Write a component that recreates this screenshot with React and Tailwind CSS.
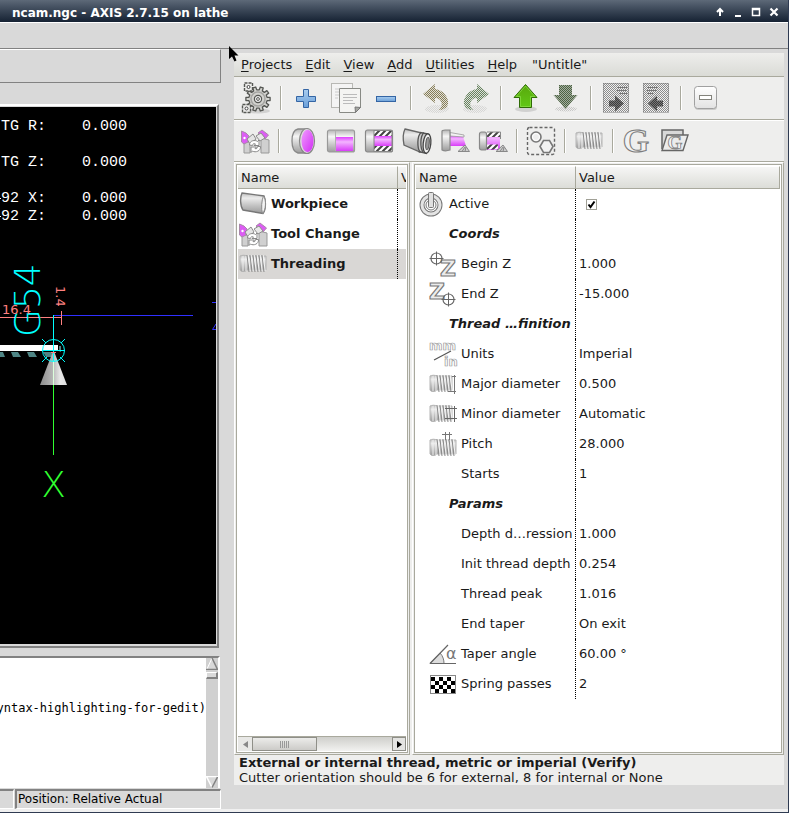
import React from 'react';

const range = (n) => Array.from({ length: n }, (_, i) => i);

function gearPath(cx, cy, outer, inner, teeth) {
  const pts = [];
  range(teeth).forEach((i) => {
    const a = (i / teeth) * Math.PI * 2;
    const s = (Math.PI * 2) / teeth;
    [[-0.28, inner], [-0.2, outer], [0.2, outer], [0.28, inner]].forEach(([o, r]) => {
      pts.push(`${(cx + Math.cos(a + o * s) * r).toFixed(2)} ${(cy + Math.sin(a + o * s) * r).toFixed(2)}`);
    });
  });
  return `M${pts.join('L')}Z`;
}

function Defs() {
  return (
    <svg className="absolute h-0 w-0" aria-hidden="true">
      <defs>
        <linearGradient id="steel" x1="0" y1="0" x2="0" y2="1">
          <stop offset="0" stopColor="#b4b4b4" />
          <stop offset="0.3" stopColor="#f6f6f6" />
          <stop offset="1" stopColor="#9c9c9c" />
        </linearGradient>
        <linearGradient id="softSteel" x1="0" y1="0" x2="0" y2="1">
          <stop offset="0" stopColor="#bdbdbd" />
          <stop offset="0.25" stopColor="#ececec" />
          <stop offset="0.6" stopColor="#c4c4c4" />
          <stop offset="1" stopColor="#9a9a9a" />
        </linearGradient>
        <linearGradient id="magenta" x1="0" y1="0" x2="0" y2="1">
          <stop offset="0" stopColor="#e040ff" />
          <stop offset="0.35" stopColor="#f3b4ff" />
          <stop offset="1" stopColor="#d93cf8" />
        </linearGradient>
        <linearGradient id="magentaFace" x1="0" y1="0" x2="1" y2="1">
          <stop offset="0" stopColor="#f09cff" />
          <stop offset="1" stopColor="#d22cf4" />
        </linearGradient>
        <linearGradient id="blue" x1="0" y1="0" x2="0" y2="1">
          <stop offset="0" stopColor="#a9cdf0" />
          <stop offset="1" stopColor="#6a9fd8" />
        </linearGradient>
        <linearGradient id="green" x1="0" y1="0" x2="0" y2="1">
          <stop offset="0" stopColor="#58a80c" />
          <stop offset="1" stopColor="#62c816" />
        </linearGradient>
        <linearGradient id="cone" x1="0" y1="0" x2="1" y2="0">
          <stop offset="0" stopColor="#8c8c8c" />
          <stop offset="0.45" stopColor="#b4b4b4" />
          <stop offset="0.75" stopColor="#e8e8e8" />
          <stop offset="1" stopColor="#dcdcdc" />
        </linearGradient>
        <linearGradient id="key" x1="0" y1="0" x2="0" y2="1">
          <stop offset="0" stopColor="#ffffff" />
          <stop offset="1" stopColor="#e2e2e2" />
        </linearGradient>
        <pattern id="ditherOlive" width="2" height="2" patternUnits="userSpaceOnUse">
          <rect width="2" height="2" fill="#e2e0d6" />
          <rect width="1" height="1" fill="#857c58" /><rect x="1" y="1" width="1" height="1" fill="#857c58" />
        </pattern>
        <pattern id="ditherGreen" width="2" height="2" patternUnits="userSpaceOnUse">
          <rect width="2" height="2" fill="#dce0da" />
          <rect width="1" height="1" fill="#66825e" /><rect x="1" y="1" width="1" height="1" fill="#66825e" />
        </pattern>
        <pattern id="ditherDark" width="2" height="2" patternUnits="userSpaceOnUse">
          <rect width="2" height="2" fill="#a4aca0" />
          <rect width="1" height="1" fill="#4c6442" /><rect x="1" y="1" width="1" height="1" fill="#4c6442" />
        </pattern>
        <pattern id="ditherGrey" width="2" height="2" patternUnits="userSpaceOnUse">
          <rect width="1" height="1" fill="#8c8c8c" /><rect x="1" y="1" width="1" height="1" fill="#8c8c8c" />
        </pattern>
        <pattern id="ditherBlack" width="2" height="2" patternUnits="userSpaceOnUse">
          <rect width="2" height="2" fill="#777" />
          <rect width="1" height="1" fill="#3c3c3c" /><rect x="1" y="1" width="1" height="1" fill="#3c3c3c" />
        </pattern>
        <pattern id="hatch" width="6" height="6" patternUnits="userSpaceOnUse">
          <rect width="6" height="6" fill="#fff" />
          <path d="M-1 7L7 -1M-1 1L1 -1M5 7L7 5" stroke="#444" strokeWidth="2" />
        </pattern>
      </defs>
    </svg>
  );
}

function Icon28({ children }) {
  return (
    <svg width="28" height="28" viewBox="0 0 28 28" fill="none" className="block flex-none overflow-visible" aria-hidden="true">
      {children}
    </svg>
  );
}

function Icon32({ children }) {
  return (
    <svg width="32" height="32" viewBox="0 0 32 32" fill="none" className="block flex-none overflow-visible" aria-hidden="true">
      {children}
    </svg>
  );
}

/* ---------- main toolbar ---------- */
const Gears = () => (
  <Icon32>
    <ellipse cx="18" cy="29" rx="12" ry="2.5" fill="#000" opacity="0.12" />
    <path d={gearPath(18, 17, 12.2, 9.2, 10)} fill="#d2d2ce" stroke="#555753" strokeWidth="1.3" strokeLinejoin="round" />
    <circle cx="18" cy="17" r="7" stroke="#a5a5a2" strokeWidth="1.6" />
    <circle cx="18" cy="17" r="3.6" fill="#eee" stroke="#555753" strokeWidth="1.2" />
    <circle cx="18" cy="17" r="1.4" fill="#fff" stroke="#555753" />
    {[[8.5, 5], [6.5, 26.5]].map(([x, y]) => (
      <g key={y}>
        <path d={`M${x - 4} ${y - 4}h8v8h-8z`} fill="#ececea" stroke="#555753" strokeWidth="1.4" strokeDasharray="3 1" strokeLinejoin="round" />
        <circle cx={x} cy={y} r="1.5" fill="#fff" stroke="#444" />
      </g>
    ))}
  </Icon32>
);
const Plus = () => (
  <Icon32>
    <path d="M13.5 7.5h5v7h7v5h-7v6h-5v-6h-7v-5h7z" fill="url(#blue)" stroke="#3465a4" />
  </Icon32>
);
const Minus = () => (
  <Icon32><rect x="6.500" y="14.500" width="19" height="5" fill="url(#blue)" stroke="#3465a4" /></Icon32>
);
const Copy = () => (
  <Icon32>
    <rect x="1.500" y="1.500" width="21" height="24" fill="#f4f4f4" stroke="#b8b8b4" />
    <path d="M5 7h4M5 10h4M5 13h4M5 16h3" stroke="#ccc" />
    <path d="M9.500 6.500h21v19l-5 5h-16z" fill="#f4f4f2" stroke="#888a85" />
    <path d="M25.500 30.500l-.5-5.500 5.500.5z" fill="#a5a7a2" stroke="#777" />
    <path d="M13 12.500h14M13 15.500h14M13 18.500h10M13 21.500h12" stroke="#bbb" />
  </Icon32>
);
const CURVE = 'M1 10L13 0V5C22 6 27 14 26 20C25 24 21 26 17 26C22 22 20 14 13 14V19Z';
const Undo = () => (
  <Icon32>
    <ellipse cx="17" cy="27" rx="12" ry="4" fill="url(#ditherGrey)" opacity="0.25" />
    <path transform="translate(2 2)" d={CURVE} fill="url(#ditherOlive)" />
  </Icon32>
);
const Redo = () => (
  <Icon32>
    <ellipse cx="15" cy="27" rx="12" ry="4" fill="url(#ditherGrey)" opacity="0.25" />
    <path transform="translate(30 2) scale(-1 1)" d={CURVE} fill="url(#ditherGreen)" />
  </Icon32>
);
const ArrowUp = () => (
  <Icon32>
    <ellipse cx="16" cy="27" rx="11" ry="3" fill="#000" opacity="0.12" />
    <path d="M15.500 2.500L27 15.500H21.500V25.500H9.500V15.500H4Z" fill="url(#green)" stroke="#2f6b06" />
    <path d="M15.500 4L25 14.500H20.500V24.500H10.500V14.500H6.200Z" stroke="#8be04a" opacity="0.7" />
  </Icon32>
);
const ArrowDown = () => (
  <Icon32>
    <ellipse cx="16" cy="27" rx="11" ry="2.5" fill="url(#ditherGrey)" opacity="0.4" />
    <path d="M9 3H22V13H27.500L15.500 27L3.500 13H9Z" fill="url(#ditherDark)" />
  </Icon32>
);
const PageIcon = ({ flip }) => (
  <Icon32>
    <rect x="3" y="1" width="26" height="29" fill="#f0f0f0" />
    <rect x="3" y="1" width="26" height="29" fill="url(#ditherGrey)" />
    <rect x="3.500" y="1.500" width="25" height="29" stroke="#777" strokeDasharray="1 1" />
    <path d={flip ? 'M7 5.500h11M7 8.500h10M7 11.500h6' : 'M17 5.500h10M17 8.500h10M19 11.500h8'} stroke="#777" />
    <path
      transform={flip ? 'translate(32 0) scale(-1 1)' : undefined}
      d="M9 18.500h6v-5l9 8-9 8v-5h-6z"
      fill="url(#ditherBlack)"
    />
  </Icon32>
);
const Collapse = () => (
  <Icon32>
    <rect x="5" y="6" width="22" height="22" rx="3" fill="#000" opacity="0.15" />
    <rect x="4.500" y="4.500" width="22" height="22" rx="3" fill="url(#key)" stroke="#a0a0a0" />
    <rect x="9.500" y="13.500" width="12" height="4" fill="#fff" stroke="#83837c" />
  </Icon32>
);

/* ---------- machining features ---------- */
const ToolChange = () => (
  <Icon28>
    <path d="M3 15H9V26H3ZM20 11L28 13V26H20Z" fill="#d0d0d0" stroke="#999" />
    <path d="M0.500 4L5 6L8 9L7 15L3 17L0.500 15Z" fill="#dc5cf4" stroke="#a8a" />
    <circle cx="3.500" cy="11" r="1.200" fill="#fff" />
    <path d="M6 12L12 7L15 12L9 17Z" fill="#e4e4e4" stroke="#8c8c8c" />
    <path d="M17 6L21 3L27.500 8L24 12Z" fill="#dc5cf4" stroke="#a8a" />
    <path d="M15 9L20 6L24 11L19 14Z" fill="#e8e8e8" stroke="#8c8c8c" />
    <path d="M8.500 18C8.500 13.500 14 12.500 16.500 14.500L18 13V18.500H13L14.500 17C13 16 11.500 17 11.500 18.500Z" fill="#fff" stroke="#888" />
    <path d="M19.500 19.500C20 24 14.500 26 11.500 24L10 25.500V20H15.500L14 21.500C15.500 22.500 16.500 21 16.500 19.500Z" fill="#fff" stroke="#888" />
  </Icon28>
);
const Facing = () => (
  <Icon28>
    <path d="M9 2C4 3 3 9 3 14C3 20 5 25 9 26H18V2Z" fill="url(#steel)" stroke="#888" strokeWidth="1.300" />
    <ellipse cx="18" cy="14" rx="7.500" ry="12.500" fill="#ddd" stroke="#888" strokeWidth="1.200" />
    <ellipse cx="18.500" cy="14" rx="6" ry="11.300" fill="url(#magentaFace)" />
  </Icon28>
);
const Turning = () => (
  <Icon28>
    <rect x="0.500" y="3" width="27" height="22" rx="2" fill="url(#steel)" stroke="#999" strokeWidth="1.200" />
    <rect x="9" y="10" width="17" height="14" fill="url(#magenta)" />
    <path d="M8.500 4V24" stroke="#b0b0b0" />
  </Icon28>
);
const Boring = () => (
  <Icon28>
    <rect x="0.500" y="3" width="27" height="22" rx="2" fill="url(#steel)" stroke="#888" strokeWidth="1.200" />
    <rect x="9" y="3.500" width="18" height="5.500" fill="url(#hatch)" />
    <rect x="9" y="9" width="18" height="10" fill="url(#magenta)" />
    <rect x="9" y="19" width="18" height="5.500" fill="url(#hatch)" />
    <rect x="9" y="3.500" width="18" height="21" stroke="#888" />
  </Icon28>
);
const Tube = () => (
  <Icon28>
    <path d="M2 2L19 6L17 25L1 18C0 13 0 6 2 2Z" fill="url(#softSteel)" stroke="#666" strokeWidth="1.300" />
    <path d="M17 5.500L24 6.500V26L15.500 24Z" fill="#ccc" />
    {[17, 20].map((x) => <path key={x} d={`M${x + 1} 5.500C${x - 3} 9 ${x - 3} 21 ${x} 25`} stroke="#555" strokeWidth="1.300" />)}
    <path d="M17 5.500L25 7M15.500 24.500L24 26.500" stroke="#555" strokeWidth="1.300" />
    <ellipse cx="24" cy="16.500" rx="3.800" ry="9.800" transform="rotate(6 24 16.500)" fill="#eee" stroke="#444" strokeWidth="1.300" />
    <ellipse cx="24.500" cy="16.500" rx="1.700" ry="6" transform="rotate(6 24 16.500)" fill="#999" stroke="#555" />
  </Icon28>
);
const Wedge = () => (
  <>
    <path d="M17 24.500L24 18L28.500 24.500Z" fill="#ccc" stroke="#888" />
    <path d="M21 24.500L24 20M24 24.500L25 20" stroke="#888" />
  </>
);
const Profile = () => (
  <Icon28>
    <path d="M9 8L22 9.500L25 19H9Z" fill="url(#magenta)" />
    <path d="M9 5.500L23 8V10L9 9Z" fill="#f2f2f2" stroke="#999" strokeWidth="0.800" />
    <path d="M1 4C1 3 3 3 4 3H9V23C6 24 3 24 1 23Z" fill="url(#steel)" stroke="#888" strokeWidth="1.200" />
    <Wedge />
  </Icon28>
);
const Internal = () => (
  <Icon28>
    <rect x="8" y="5" width="13" height="18" fill="url(#magenta)" />
    <rect x="8" y="5" width="14" height="5" fill="url(#hatch)" />
    <rect x="8" y="17.500" width="11" height="5" fill="url(#hatch)" />
    <rect x="0.500" y="5" width="7" height="18" rx="2" fill="url(#steel)" stroke="#888" strokeWidth="1.200" />
    <path d="M8 5H21.500V12" stroke="#888" />
    <Wedge />
  </Icon28>
);
const Group = () => (
  <Icon28>
    <rect x="0.500" y="0.500" width="27" height="27" rx="2" stroke="#666" strokeWidth="1.400" strokeDasharray="3 2" />
    <circle cx="9" cy="10" r="5" fill="#eee" stroke="#777" strokeWidth="1.600" />
    <circle cx="9" cy="10" r="3.500" stroke="#fff" />
    <path d="M16.500 13.500H22.500L26 19.500L22.500 25.500H16.500L13 19.500Z" fill="#f2f2f2" stroke="#777" strokeWidth="1.600" />
  </Icon28>
);
const ThreadBody = ({ top = 5, end = 27 }) => (
  <g>
    <path d={`M1 ${top + 1}C3 ${top} 6 ${top} 8 ${top + 1}H${end}V${top + 15}H8C6 ${top + 17} 2 ${top + 17} 1 ${top + 15}Z`} fill="url(#softSteel)" stroke="#b4b4b4" />
    <path d={`M4 ${top + 1}V${top + 16}M7 ${top + 1}V${top + 16}`} stroke="#f0f0f0" />
    {[8, 11, 14, 17, 20, 23].filter((x) => x < end - 2).map((x) => (
      <g key={x}>
        <path d={`M${x} ${top}L${x + 2} ${top + 17}`} stroke="#8a8a8a" />
        <path d={`M${x + 1.2} ${top}L${x + 3.2} ${top + 16}`} stroke="#f4f4f4" />
      </g>
    ))}
  </g>
);
const Thread = () => <Icon28><ThreadBody /></Icon28>;
const GLetter = () => (
  <Icon28>
    <text x="13" y="25" textAnchor="middle" fontFamily="Liberation Serif, serif" fontSize="34" fontWeight="700" fill="#f2f2f2" stroke="#7c7c7c" strokeWidth="1.100">G</text>
  </Icon28>
);
const GFolder = () => (
  <Icon28>
    <path d="M1 22V3H22V8" fill="#d8d8d8" stroke="#666" strokeWidth="1.500" />
    <path d="M6 8H27L22 23.500H1Z" fill="#ececec" stroke="#666" strokeWidth="1.400" />
    <text x="14" y="22" textAnchor="middle" fontFamily="Liberation Serif, serif" fontSize="19" fontWeight="700" fill="#f8f8f8" stroke="#888" strokeWidth="0.900">G</text>
  </Icon28>
);
const Workpiece = () => (
  <Icon28>
    <path d="M3 3L25 6C27 10 27 20 24 23.500L4 20C1 16 1 7 3 3Z" fill="url(#softSteel)" stroke="#777" strokeWidth="1.400" />
    <path d="M24.500 6C22.500 10 22 19 23.500 23.500C27 20 27.500 10 24.500 6Z" fill="#f4f4f4" stroke="#888" />
  </Icon28>
);

/* ---------- parameters ---------- */
const Power = () => (
  <Icon28>
    <circle cx="14" cy="15" r="9" stroke="#777" strokeWidth="5" />
    <circle cx="14" cy="15" r="9" stroke="#e4e4e4" strokeWidth="3" />
    <circle cx="14" cy="15" r="5" stroke="#777" />
    <rect x="11.500" y="2.500" width="5" height="15" rx="1" fill="#e0e0e0" stroke="#777" />
  </Icon28>
);
const Cross = ({ x, y }) => (
  <g stroke="#666">
    <circle cx={x} cy={y} r="5.500" strokeWidth="1.200" />
    <path d={`M${x - 7} ${y}h14M${x} ${y - 7}v14`} />
  </g>
);
const ZShape = ({ x, y }) => (
  <text x={x} y={y} fontFamily="DejaVu Sans, sans-serif" fontSize="22" fontWeight="700" fill="#ececec" stroke="#777" strokeWidth="1.100">Z</text>
);
const BeginZ = () => <Icon28><ZShape x="11" y="26" /><Cross x={7.5} y={8.5} /></Icon28>;
const EndZ = () => <Icon28><ZShape x="0" y="19" /><Cross x={19.5} y={19.5} /></Icon28>;
const Units = () => (
  <Icon28>
    <text x="0" y="10" fontFamily="DejaVu Sans, sans-serif" fontSize="13" fontWeight="700" fill="#fff" stroke="#999" strokeWidth="0.700">mm</text>
    <path d="M5 20L22 11" stroke="#555" strokeWidth="1.200" />
    <text x="15" y="26" fontFamily="DejaVu Sans, sans-serif" fontSize="13" fontWeight="700" fill="#fff" stroke="#999" strokeWidth="0.700">in</text>
  </Icon28>
);
const Major = () => <Icon28><ThreadBody end={23} /><path d="M19 21.500H27M23 6.500H27M25.500 5V24" stroke="#777" /></Icon28>;
const Minor = () => <Icon28><ThreadBody end={23} /><path d="M16 8.500H28M16 18.500H28M25.500 6V22" stroke="#666" /></Icon28>;
const Pitch = () => <Icon28><ThreadBody top={9} /><path d="M13 4.500H23M16.500 2V10M20.500 2V10" stroke="#777" /></Icon28>;
const Taper = () => (
  <Icon28>
    <path d="M1 23.500L11 13C14 16 15 20 15 23.500Z" fill="#ddd" stroke="#777" />
    <path d="M1 23.500H27M1 23.500L19 5" stroke="#666" strokeWidth="1.200" />
    <text x="17" y="19" fontFamily="DejaVu Sans, sans-serif" fontSize="16" fill="#777">α</text>
  </Icon28>
);
const Checker = () => (
  <Icon28>
    <rect x="1.500" y="5.500" width="25" height="18" fill="#fff" stroke="#888" />
    {range(6).map((c) => range(4).map((r) => (c + r) % 2 === 0 && (
      <rect key={`${c}-${r}`} x={2 + c * 4} y={7 + r * 4} width="4" height="4" fill="#000" />
    )))}
  </Icon28>
);

/* ---------- chrome ---------- */
const TitleBar = () => (
  <header className="flex h-[22px] items-center justify-between bg-linear-to-b from-[#5d6978] to-[#162233] pl-3 pr-[5px] text-white">
    <h1 className="whitespace-nowrap pt-1 text-xs font-bold">ncam.ngc - AXIS 2.7.15 on lathe</h1>
    <div className="flex items-center pt-[2px]">
      {[
        ['Shade', 'M7 11V4M4 7L7 4L10 7', 2],
        ['Minimize', 'M4 11H10', 2],
        ['Maximize', 'M3.5 3.5H10.500V10.500H3.500ZM3 4.500H11', 1.5],
        ['Close', 'M3.500 3.500L10.500 10.500M10.500 3.500L3.500 10.500', 2.2],
      ].map(([label, d, w]) => (
        <button key={label} aria-label={label} className="flex w-[18px] justify-center">
          <svg width="14" height="14" viewBox="0 0 14 14" fill="none" stroke="#fff" strokeWidth={w}><path d={d} /></svg>
        </button>
      ))}
    </div>
  </header>
);

const Backplot = () => (
  <section aria-label="Backplot" className="mr-[2px] mt-[21px] flex flex-1 flex-col border-b-2 border-r-2 border-t-2 border-b-[#828282] border-r-[#828282] border-t-white pb-[2px] pr-px pt-px">
    <div className="grid flex-1 overflow-hidden bg-black">
      <pre className="col-start-1 row-start-1 pl-px pt-[11px] font-['Liberation_Mono',monospace] text-[15px] leading-[18px] text-white">
        {'TG R:    0.000\n\nTG Z:    0.000\n\n92 X:    0.000\n92 Z:    0.000'}
      </pre>
      <svg width="216" height="537" viewBox="0 107 216 537" fill="none" className="col-start-1 row-start-1" fontFamily="DejaVu Sans Light, DejaVu Sans, sans-serif" fontWeight="200">
        <path d="M0 198.500H1M0 216.500H1" stroke="#fff" />
        <path d="M0 345H58V351H0Z" fill="#fff" />
        <path d="M0 352H3L5 357H0ZM11 352H18L21 357H13ZM27 352H34L37 357H29ZM43 352H52V357H46ZM59 346H61V352L59 351Z" fill="#4f8585" />
        <path d="M53.500 350L67 385H40Z" fill="url(#cone)" />
        <path d="M53.500 353V385" stroke="#dcffdc" />
        <path d="M53 315.500H193" stroke="#3030ff" />
        <path d="M212 302.500H216M216 324L212.500 329.500H216" stroke="#3030ff" />
        <path d="M0 317.500H61.500M61.500 311V325" stroke="#ff8080" />
        <path d="M53.500 315V361M42 350.500H65" stroke="#00ffff" />
        <circle cx="53.500" cy="350.500" r="11" stroke="#00ffff" />
        <path d="M42 339L46 343M65 339L61 343M42 362L47 357M65 362L60 357" stroke="#00ffff" />
        <path d="M51 352.500H56" stroke="#ff8080" />
        <path d="M53.500 385V455" stroke="#30ff30" />
        <text transform="translate(40 337) rotate(-90)" fontSize="36" fill="#00ffff">G54</text>
        <text transform="translate(56 286) rotate(90)" fontSize="13" fill="#ff8080" fontFamily="DejaVu Sans, sans-serif" fontWeight="400">1.4</text>
        <text x="2" y="314" fontSize="13" fill="#ff8080" fontFamily="DejaVu Sans, sans-serif" fontWeight="400">16.4</text>
        <text x="53.500" y="497" textAnchor="middle" fontSize="36" fill="#30ff30">X</text>
      </svg>
    </div>
  </section>
);

const CodeView = () => (
  <section aria-label="Program" className="mr-px mt-2 flex h-[132px] border-r-2 border-t-2 border-r-white border-t-[#828282] bg-white">
    <div className="flex flex-1 justify-end overflow-hidden pt-[43px]">
      <code className="whitespace-nowrap font-['DejaVu_Sans_Mono',monospace] text-xs leading-[14px] text-black">yntax-highlighting-for-gedit)</code>
    </div>
    <div className="flex w-3 flex-none flex-col justify-between bg-[#d0d0d0]">
      <div>
        <button aria-label="Scroll up" className="block">
          <svg width="12" height="12" viewBox="0 0 12 12"><path d="M6 0L0 12H12Z" fill="#d9d9d9" /><path d="M6 0L1 11" stroke="#fff" /><path d="M6 0L11.500 11.500H0" stroke="#828282" strokeWidth="1.500" fill="none" /></svg>
        </button>
        <div className="mt-[2px] h-[7px] border-b-2 border-l border-r-2 border-t border-b-[#828282] border-l-white border-r-[#828282] border-t-white bg-[#d9d9d9]" />
      </div>
      <button aria-label="Scroll down" className="block">
        <svg width="12" height="12" viewBox="0 0 12 12"><path d="M0 0H12L6 12Z" fill="#d9d9d9" /><path d="M12 .5H.5L6 11.500" stroke="#fff" strokeWidth="1.500" fill="none" /><path d="M6 11.500L11.500 1" stroke="#828282" strokeWidth="1.500" /></svg>
      </button>
    </div>
  </section>
);

const MENU = ['Projects', 'Edit', 'View', 'Add', 'Utilities', 'Help'];
const MAIN_TOOLS = [
  [['Projects', <Gears />]],
  [['Add', <Plus />], ['Duplicate', <Copy />], ['Remove', <Minus />]],
  [['Undo', <Undo />], ['Redo', <Redo />]],
  [['Move up', <ArrowUp />], ['Move down', <ArrowDown />]],
  [['Append item', <PageIcon />], ['Remove item', <PageIcon flip />]],
  [['Collapse', <Collapse />]],
];
const FEATURE_TOOLS = [
  [['Tool change', <ToolChange />]],
  [['Facing', <Facing />], ['Turning', <Turning />], ['Boring', <Boring />], ['Tube', <Tube />], ['Profile', <Profile />], ['Internal profile', <Internal />]],
  [['Group', <Group />]],
  [['Threading', <Thread />]],
  [['G-code', <GLetter />], ['G-code file', <GFolder />]],
];

const Toolbar = ({ groups, label, bar, item }) => (
  <div role="toolbar" aria-label={label} className={`flex items-center border-b border-b-[#a9a99d] bg-[#eeeeed] pl-[2px] ${bar}`}>
    {groups.map((group, g) => (
      <React.Fragment key={g}>
        {g > 0 && <div className="flex w-[10px] justify-center"><div className="h-6 w-[2px] border-l border-r border-l-[#a9a99d] border-r-white" /></div>}
        {group.map(([name, icon]) => (
          <button key={name} aria-label={name} className={`flex justify-center ${item}`}>{icon}</button>
        ))}
      </React.Fragment>
    ))}
  </div>
);

const Th = ({ children, last }) => (
  <th className={`h-[23px] overflow-hidden whitespace-nowrap border-b border-t border-b-[#a9a99d] border-t-white bg-linear-to-b from-[#f6f6f5] to-[#dcddd8] p-0 pl-[3px] text-left font-normal ${last ? '' : 'border-r border-r-[#a9a99d]'}`}>{children}</th>
);

const Frame = ({ children, className }) => (
  <div className={`flex border border-b-[#a9a99d] border-l-white border-r-[#a9a99d] border-t-white p-px ${className}`}>
    <div className="flex min-w-0 flex-1 flex-col border border-[#a9a99d] bg-white p-px">{children}</div>
  </div>
);

const FEATURES = [
  ['Workpiece', <Workpiece />],
  ['Tool Change', <ToolChange />],
  ['Threading', <Thread />],
];

const FeatureTree = () => (
  <Frame className="w-[176px] flex-none">
    <table className="w-full table-fixed border-separate border-spacing-0">
      <colgroup><col className="w-[160px]" /><col /></colgroup>
      <thead><tr><Th>Name</Th><Th last>V</Th></tr></thead>
      <tbody>
        {FEATURES.map(([name, icon], i) => (
          <tr key={name} className={i === 2 ? 'bg-[#d9d7d5]' : ''}>
            <td className="h-[30px] border-r border-dotted border-black p-0 pl-px">
              <div className="flex items-center gap-1 font-bold">{icon}{name}</div>
            </td>
            <td />
          </tr>
        ))}
      </tbody>
    </table>
    <div className="mt-auto flex h-[15px] border-t border-[#a9a99d]">
      <button aria-label="Scroll left" className="flex w-[14px] items-center justify-center bg-[#e8e8e6]">
        <svg width="5" height="7" viewBox="0 0 5 7"><path d="M5 0V7L0 3.500Z" fill="#888" /></svg>
      </button>
      <div className="flex flex-1 bg-linear-to-b from-[#cfcfcb] to-[#f2f2f0]">
        <div className="flex w-[65px] items-center justify-center gap-px border border-[#8f8f88] bg-linear-to-b from-[#ececea] to-[#cccbc8]">
          {range(5).map((i) => <span key={i} className="h-[7px] w-px bg-[#999]" />)}
        </div>
      </div>
      <button aria-label="Scroll right" className="flex w-[14px] items-center justify-center border border-[#8f8f88] bg-[#e4e4e2]">
        <svg width="5" height="7" viewBox="0 0 5 7"><path d="M0 0V7L5 3.500Z" fill="#000" /></svg>
      </button>
    </div>
  </Frame>
);

const PARAMS = [
  { name: 'Active', icon: <Power />, check: true },
  { head: 'Coords' },
  { name: 'Begin Z', icon: <BeginZ />, value: '1.000' },
  { name: 'End Z', icon: <EndZ />, value: '-15.000' },
  { head: 'Thread …finition' },
  { name: 'Units', icon: <Units />, value: 'Imperial' },
  { name: 'Major diameter', icon: <Major />, value: '0.500' },
  { name: 'Minor diameter', icon: <Minor />, value: 'Automatic' },
  { name: 'Pitch', icon: <Pitch />, value: '28.000' },
  { name: 'Starts', value: '1' },
  { head: 'Params' },
  { name: 'Depth d…ression', value: '1.000' },
  { name: 'Init thread depth', value: '0.254' },
  { name: 'Thread peak', value: '1.016' },
  { name: 'End taper', value: 'On exit' },
  { name: 'Taper angle', icon: <Taper />, value: '60.00 °' },
  { name: 'Spring passes', icon: <Checker />, value: '2' },
];

const ParamTree = () => (
  <Frame className="min-w-0 flex-1">
    <table className="w-full table-fixed border-separate border-spacing-0">
      <colgroup><col className="w-[160px]" /><col /></colgroup>
      <thead><tr><Th>Name</Th><Th>Value</Th></tr></thead>
      <tbody>
        {PARAMS.map((p) => (
          <tr key={p.name || p.head}>
            <td className="h-[30px] whitespace-nowrap border-r border-dotted border-black p-0 pl-px">
              {p.head ? (
                <div className="pl-8 font-bold italic">{p.head}</div>
              ) : (
                <div className={`flex items-center gap-1 ${p.check ? '' : 'pl-3'}`}>
                  {p.icon || <span className="w-7 flex-none" />}
                  {p.check ? <label htmlFor="active">{p.name}</label> : p.name}
                </div>
              )}
            </td>
            <td className="p-0 pl-[3px]">
              {p.check ? (
                <div className="grid w-6 place-items-center">
                  <input id="active" type="checkbox" defaultChecked className="peer col-start-1 row-start-1 h-[11px] w-[11px] appearance-none border border-[#a0a096] bg-white" />
                  <svg width="9" height="9" viewBox="0 0 9 9" className="pointer-events-none invisible col-start-1 row-start-1 peer-checked:visible"><path d="M1.500 4.500L3.500 7L7.500 1.500" stroke="#000" strokeWidth="2" fill="none" /></svg>
                </div>
              ) : p.value}
            </td>
          </tr>
        ))}
      </tbody>
    </table>
  </Frame>
);

const NcamPanel = () => (
  <main className="mb-6 ml-[13px] mr-1 mt-1 flex min-w-0 flex-1 flex-col bg-[#eeeeed] text-[#1a1a1a]">
    <nav className="flex h-6 items-center gap-px border-b border-b-[#a9a99d] bg-linear-to-b from-[#eeeeec] to-[#dadbd6] pl-px">
      {MENU.map((m) => (
        <button key={m} className="px-[6px]"><span className="underline underline-offset-2">{m[0]}</span>{m.slice(1)}</button>
      ))}
      <button className="px-2">"Untitle"</button>
    </nav>
    <Toolbar label="Main" groups={MAIN_TOOLS} bar="h-[43px]" item="w-10" />
    <Toolbar label="Features" groups={FEATURE_TOOLS} bar="h-[42px] border-t border-t-white" item="w-[38px]" />
    <div className="flex flex-1 gap-[2px]">
      <FeatureTree />
      <ParamTree />
    </div>
    <footer className="h-[30px] whitespace-nowrap pl-[5px] leading-[15px]">
      <p className="font-bold">External or internal thread, metric or imperial (Verify)</p>
      <p>Cutter orientation should be 6 for external, 8 for internal or None</p>
    </footer>
  </main>
);

export default function App() {
  return (
    <div className="relative flex min-h-screen flex-col border-b border-r border-[#2f3b52] bg-[#d9d9d9] font-['DejaVu_Sans',sans-serif] text-[13px] leading-4">
      <Defs />
      <TitleBar />
      <div className="h-[27px] border-b border-t border-b-[#828282] border-t-white" />
      <div className="flex flex-1 border-b-[3px] border-b-[#f0f0f0]">
        <div className="flex w-[221px] flex-none flex-col">
          <div className="h-[34px] border-b border-r border-t border-b-[#828282] border-r-[#828282] border-t-white" />
          <Backplot />
          <CodeView />
          <div className="mt-px flex h-5 gap-px text-xs text-black">
            <div className="w-[14px] border-b border-r border-t-2 border-b-white border-r-white border-t-[#828282]" />
            <p className="flex-1 border-b border-l-2 border-r border-t-2 border-b-white border-l-[#828282] border-r-white border-t-[#828282] pl-px">Position: Relative Actual</p>
          </div>
        </div>
        <NcamPanel />
      </div>
      <svg width="12" height="17" viewBox="0 0 12 17" className="absolute left-[228px] top-[45px]" aria-hidden="true">
        <path d="M1 1V14L4 11.500L6.500 16.500L8.500 15.500L6.500 10.500H10.500Z" fill="#000" />
      </svg>
    </div>
  );
}
